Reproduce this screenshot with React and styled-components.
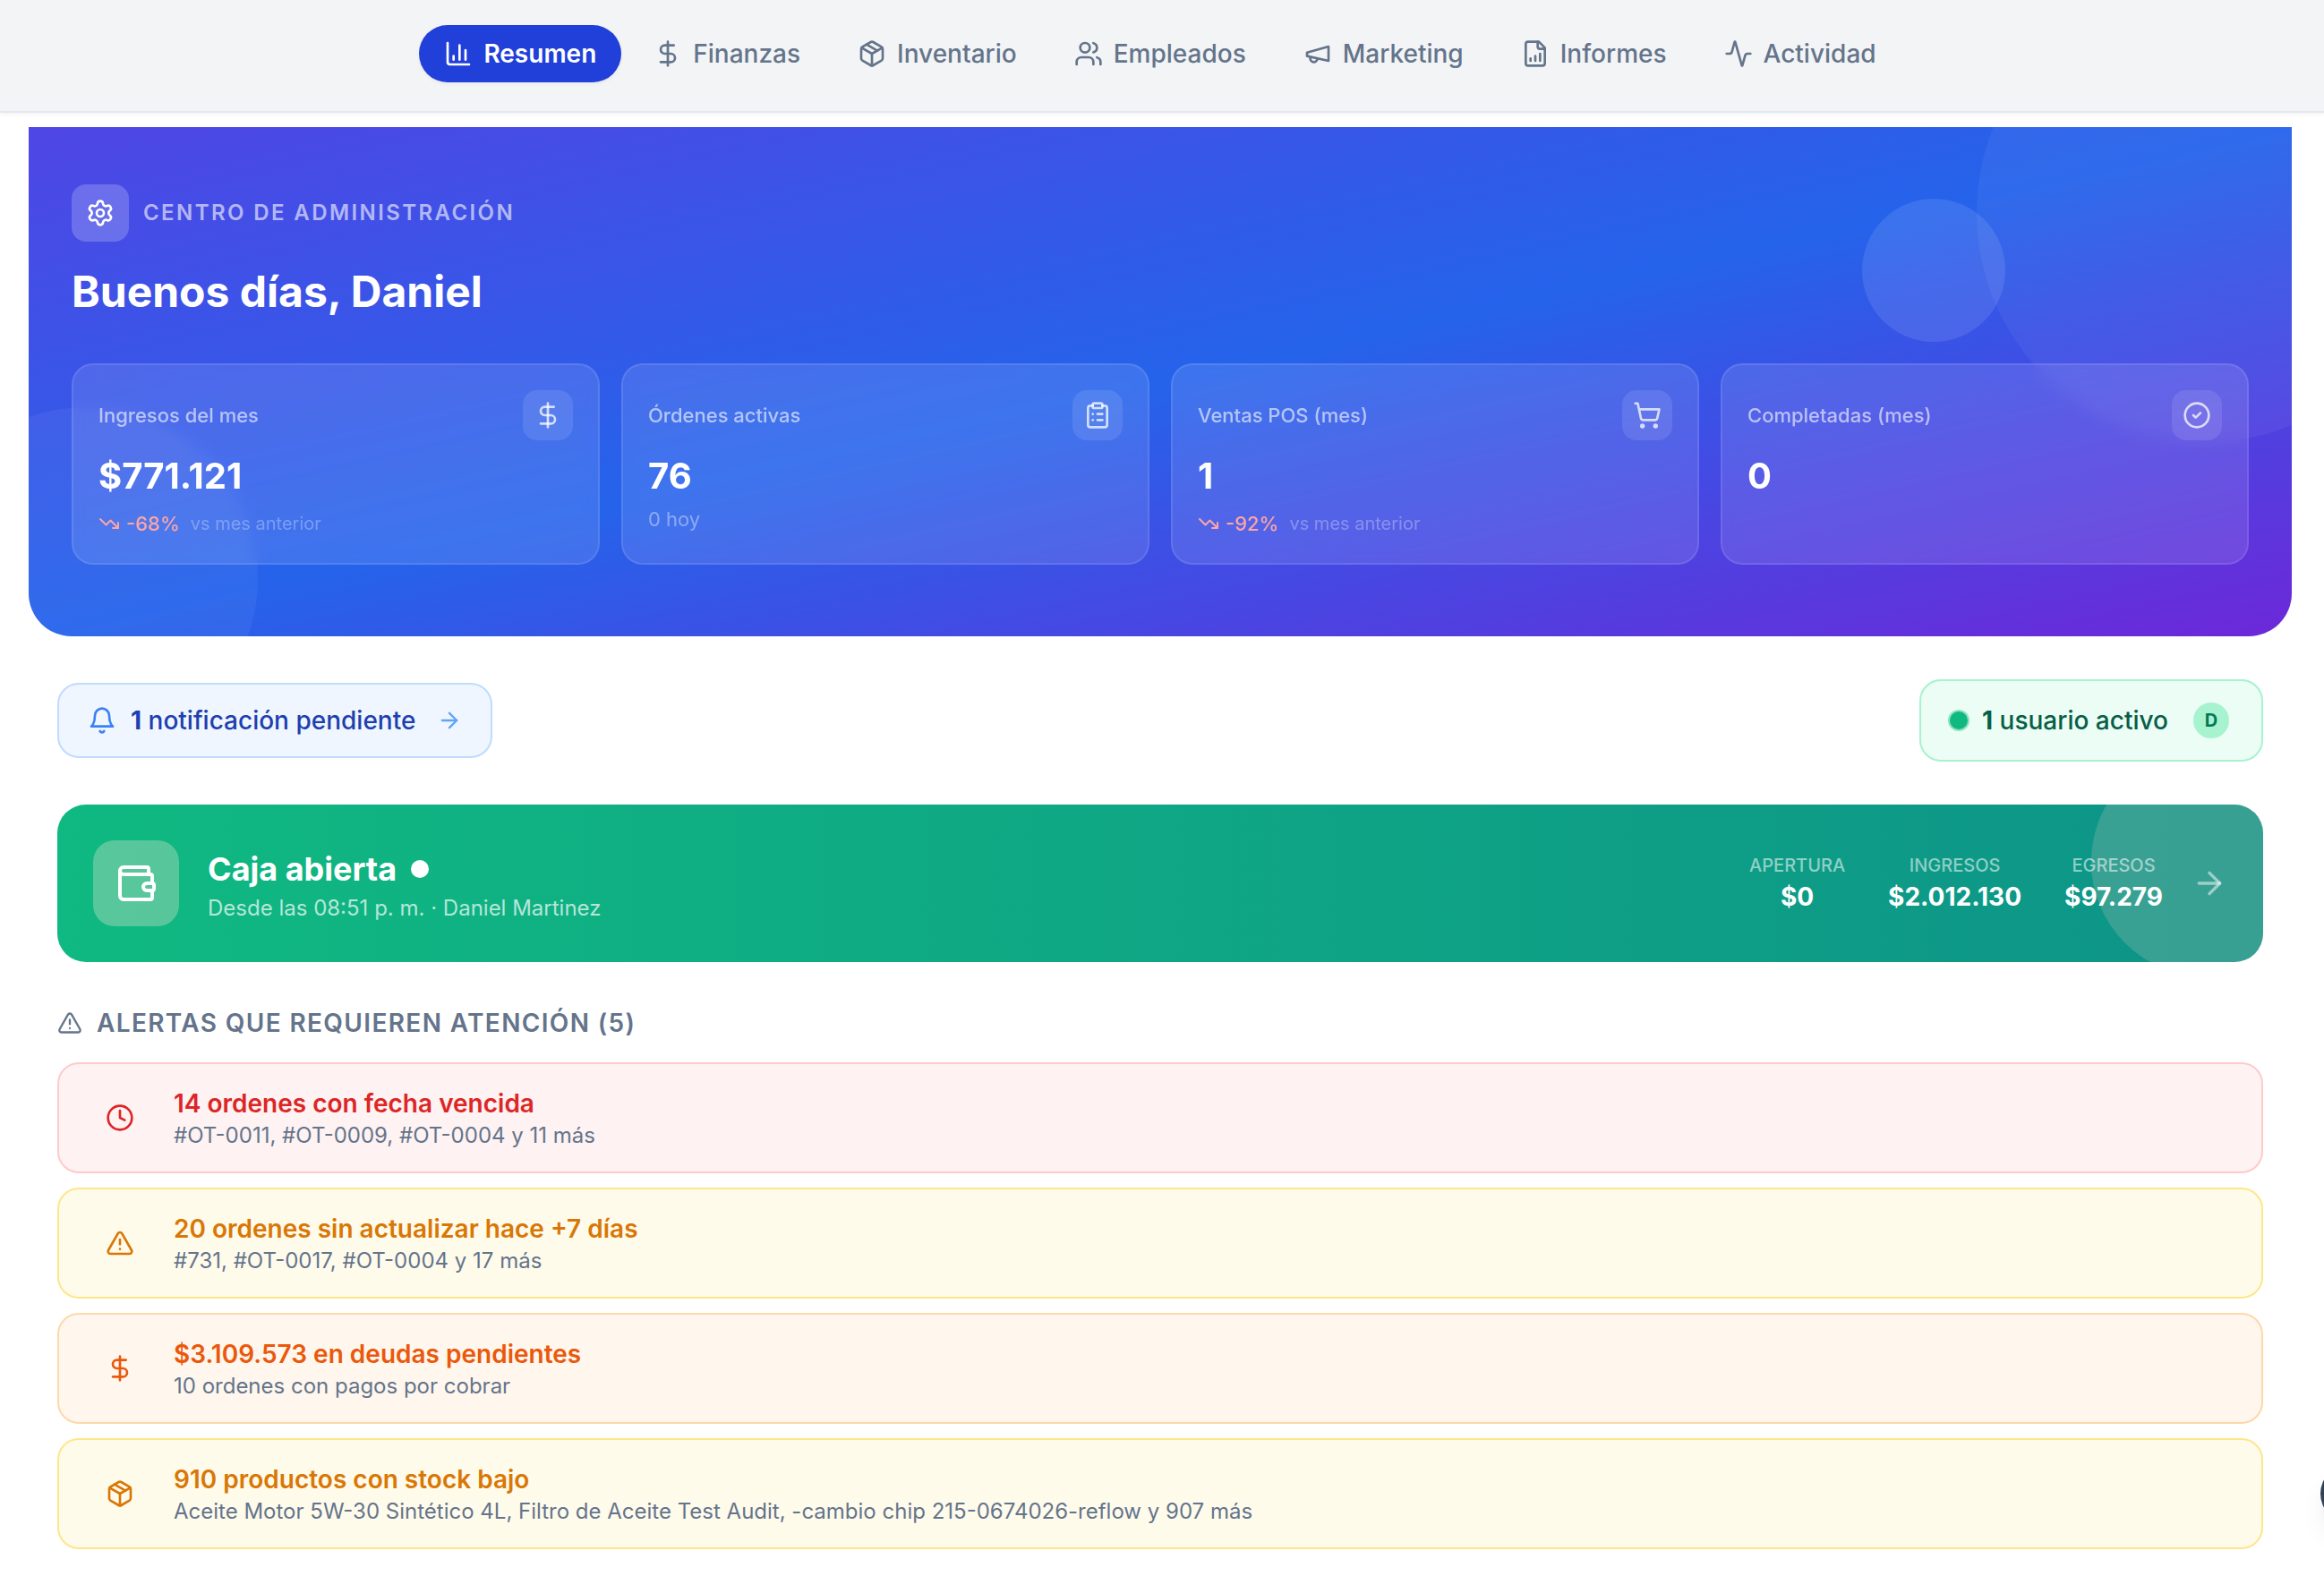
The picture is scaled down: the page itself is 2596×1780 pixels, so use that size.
import React from "react";
import styled, { createGlobalStyle, css } from "styled-components";
import {
  Activity,
  ArrowRight,
  CircleCheck,
  ChartColumn,
  ClipboardList,
  Clock,
  DollarSign,
  Package,
  Settings,
  ShoppingCart,
  TrendingDown,
  TriangleAlert,
  Users,
  Wallet
} from "lucide-react";

const GlobalStyle = createGlobalStyle`
  *, *::before, *::after {
    box-sizing: border-box;
  }
  body {
    margin: 0;
    background: #ffffff;
    font-family: Inter, sans-serif;
    -webkit-font-smoothing: antialiased;
  }
  svg {
    display: block;
    flex-shrink: 0;
  }
`;

const Glyph = ({ size = 32, children }) => (
  <svg
    width={size}
    height={size}
    viewBox="0 0 24 24"
    fill="none"
    stroke="currentColor"
    strokeWidth="2"
    strokeLinecap="round"
    strokeLinejoin="round"
  >
    {children}
  </svg>
);

const Megaphone = ({ size }) => (
  <Glyph size={size}>
    <path d="m3 11 18-5v12L3 14v-3z" />
    <path d="M11.6 16.8a3 3 0 1 1-5.8-1.6" />
  </Glyph>
);

const FileChart = ({ size }) => (
  <Glyph size={size}>
    <path d="M15 2H6a2 2 0 0 0-2 2v16a2 2 0 0 0 2 2h12a2 2 0 0 0 2-2V7Z" />
    <path d="M14 2v4a2 2 0 0 0 2 2h4" />
    <path d="M8 18v-2" />
    <path d="M12 18v-4" />
    <path d="M16 18v-6" />
  </Glyph>
);

const Bell = ({ size }) => (
  <Glyph size={size}>
    <path d="M6 8a6 6 0 0 1 12 0c0 7 3 9 3 9H3s3-2 3-9" />
    <path d="M10.3 21a1.94 1.94 0 0 0 3.4 0" />
  </Glyph>
);

const tabs = [
  { label: "Resumen", icon: ChartColumn, active: true },
  { label: "Finanzas", icon: DollarSign },
  { label: "Inventario", icon: Package },
  { label: "Empleados", icon: Users },
  { label: "Marketing", icon: Megaphone },
  { label: "Informes", icon: FileChart },
  { label: "Actividad", icon: Activity }
];

const stats = [
  { label: "Ingresos del mes", value: "$771.121", icon: DollarSign, trend: "-68%" },
  { label: "Órdenes activas", value: "76", icon: ClipboardList, note: "0 hoy" },
  { label: "Ventas POS (mes)", value: "1", icon: ShoppingCart, trend: "-92%" },
  { label: "Completadas (mes)", value: "0", icon: CircleCheck }
];

const totals = [
  { label: "Apertura", value: "$0" },
  { label: "Ingresos", value: "$2.012.130" },
  { label: "Egresos", value: "$97.279" }
];

const alerts = [
  {
    tone: "red",
    icon: Clock,
    title: "14 ordenes con fecha vencida",
    detail: "#OT-0011, #OT-0009, #OT-0004 y 11 más"
  },
  {
    tone: "amber",
    icon: TriangleAlert,
    title: "20 ordenes sin actualizar hace +7 días",
    detail: "#731, #OT-0017, #OT-0004 y 17 más"
  },
  {
    tone: "orange",
    icon: DollarSign,
    title: "$3.109.573 en deudas pendientes",
    detail: "10 ordenes con pagos por cobrar"
  },
  {
    tone: "amber",
    icon: Package,
    title: "910 productos con stock bajo",
    detail:
      "Aceite Motor 5W-30 Sintético 4L, Filtro de Aceite Test Audit, -cambio chip 215-0674026-reflow y 907 más"
  }
];

const tones = {
  red: { bg: "#fef2f2", border: "#fecaca", text: "#dc2626" },
  amber: { bg: "#fffbeb", border: "#fde68a", text: "#d97706" },
  orange: { bg: "#fff7ed", border: "#fed7aa", text: "#ea580c" }
};

const App = () => (
  <Page>
    <GlobalStyle />
    <TopBar>
      {tabs.map(({ label, icon: Icon, active }) => (
        <Tab key={label} $active={active}>
          <Icon size={32} />
          {label}
        </Tab>
      ))}
    </TopBar>

    <Main>
      <Hero>
        <Bubble $size={512} $top="-160px" $right="-160px" $alpha={0.05} />
        <Bubble $size={384} $bottom="-128px" $left="-128px" $alpha={0.05} />
        <Bubble $size={160} $top="80px" $right="320px" $alpha={0.1} />
        <Eyebrow>
          <EyebrowIcon>
            <Settings size={32} />
          </EyebrowIcon>
          <EyebrowText>Centro de Administración</EyebrowText>
        </Eyebrow>
        <Greeting>Buenos días, Daniel</Greeting>
        <StatGrid>
          {stats.map(({ label, value, icon: Icon, trend, note }) => (
            <StatCard key={label}>
              <StatHead>
                {label}
                <StatIcon>
                  <Icon size={32} />
                </StatIcon>
              </StatHead>
              <StatValue>{value}</StatValue>
              {trend && (
                <Trend>
                  <TrendingDown size={24} />
                  {trend}
                  <TrendHint>vs mes anterior</TrendHint>
                </Trend>
              )}
              {note && <StatNote>{note}</StatNote>}
            </StatCard>
          ))}
        </StatGrid>
      </Hero>

      <Content>
        <StatusRow>
          <Notice>
            <Bell size={32} />
            <span>
              <b>1</b> notificación pendiente
            </span>
            <NoticeArrow>
              <ArrowRight size={28} />
            </NoticeArrow>
          </Notice>
          <OnlineUsers>
            <OnlineDot />
            <span>
              <b>1</b> usuario activo
            </span>
            <Avatar>D</Avatar>
          </OnlineUsers>
        </StatusRow>

        <CashPanel>
          <CashBubble />
          <CashIcon>
            <Wallet size={48} />
          </CashIcon>
          <CashInfo>
            <CashTitle>
              Caja abierta
              <CashDot />
            </CashTitle>
            <CashSince>Desde las 08:51 p. m. · Daniel Martinez</CashSince>
          </CashInfo>
          <Totals>
            {totals.map(({ label, value }) => (
              <Total key={label}>
                <TotalLabel>{label}</TotalLabel>
                <TotalValue>{value}</TotalValue>
              </Total>
            ))}
          </Totals>
          <CashArrow>
            <ArrowRight size={40} />
          </CashArrow>
        </CashPanel>

        <section>
          <SectionTitle>
            <TriangleAlert size={28} />
            Alertas que requieren atención (5)
          </SectionTitle>
          <AlertList>
            {alerts.map(({ tone, icon: Icon, title, detail }) => (
              <Alert key={title} $tone={tones[tone]}>
                <AlertIcon>
                  <Icon size={32} />
                </AlertIcon>
                <div>
                  <AlertTitle>{title}</AlertTitle>
                  <AlertDetail>{detail}</AlertDetail>
                </div>
              </Alert>
            ))}
          </AlertList>
        </section>
      </Content>
    </Main>
    <FloatingButton />
  </Page>
);

export default App;

const Page = styled.div`
  position: relative;
  width: 2596px;
  height: 1780px;
  overflow: hidden;
`;

const TopBar = styled.nav`
  display: flex;
  justify-content: center;
  gap: 8px;
  height: 126px;
  padding: 28px 4px 32px 0;
  background: #f3f4f6;
  border-bottom: 2px solid #e2e8f0;
  box-shadow: 0 2px 4px rgba(0, 0, 0, 0.05);
`;

const Tab = styled.button`
  display: flex;
  align-items: center;
  gap: 12px;
  height: 64px;
  padding: 0 28px;
  border: 0;
  border-radius: 32px;
  background: transparent;
  color: #64748b;
  font: 500 28px/40px Inter, sans-serif;
  ${({ $active }) =>
    $active &&
    css`
      background: #213fd9;
      color: #ffffff;
      font-weight: 600;
      box-shadow: 0 2px 4px rgba(0, 0, 0, 0.05);
    `}
`;

const Main = styled.main`
  padding: 16px 36px 0 32px;
`;

const Hero = styled.section`
  position: relative;
  overflow: hidden;
  padding: 64px 48px 80px;
  border-radius: 0 0 48px 48px;
  background: linear-gradient(to bottom right, #4f46e5, #2563eb, #6d28d9);
  color: #ffffff;
`;

const Bubble = styled.div`
  position: absolute;
  width: ${({ $size }) => $size}px;
  height: ${({ $size }) => $size}px;
  top: ${({ $top }) => $top || "auto"};
  right: ${({ $right }) => $right || "auto"};
  bottom: ${({ $bottom }) => $bottom || "auto"};
  left: ${({ $left }) => $left || "auto"};
  border-radius: 50%;
  background: rgba(255, 255, 255, ${({ $alpha }) => $alpha});
`;

const Eyebrow = styled.div`
  display: flex;
  align-items: center;
  gap: 16px;
`;

const EyebrowIcon = styled.div`
  display: grid;
  place-items: center;
  width: 64px;
  height: 64px;
  border-radius: 16px;
  background: rgba(255, 255, 255, 0.2);
`;

const EyebrowText = styled.span`
  color: rgba(255, 255, 255, 0.6);
  font-size: 24px;
  font-weight: 600;
  letter-spacing: 0.1em;
  line-height: 32px;
  text-transform: uppercase;
`;

const Greeting = styled.h1`
  margin: 24px 0 48px;
  font-size: 48px;
  font-weight: 700;
  line-height: 64px;
`;

const StatGrid = styled.div`
  display: grid;
  grid-template-columns: repeat(4, 1fr);
  gap: 24px;
`;

const StatCard = styled.div`
  position: relative;
  padding: 28px;
  border: 2px solid rgba(255, 255, 255, 0.1);
  border-radius: 24px;
  background: rgba(255, 255, 255, 0.115);
  backdrop-filter: blur(8px);
`;

const StatHead = styled.div`
  display: flex;
  align-items: center;
  justify-content: space-between;
  margin-bottom: 12px;
  color: rgba(255, 255, 255, 0.6);
  font-size: 22px;
  font-weight: 500;
`;

const StatIcon = styled.div`
  display: grid;
  place-items: center;
  width: 56px;
  height: 56px;
  border-radius: 16px;
  background: rgba(255, 255, 255, 0.1);
  color: rgba(255, 255, 255, 0.75);
`;

const StatValue = styled.div`
  font-size: 40px;
  font-weight: 700;
  line-height: 56px;
`;

const Trend = styled.div`
  display: flex;
  align-items: center;
  gap: 7px;
  margin-top: 8px;
  padding-top: 1px;
  color: #fca5a5;
  font-size: 22px;
  font-weight: 500;
  line-height: 32px;
`;

const TrendHint = styled.span`
  margin-left: 5px;
  color: rgba(255, 255, 255, 0.3);
  font-size: 20px;
  font-weight: 400;
`;

const StatNote = styled.div`
  margin-top: 4px;
  color: rgba(255, 255, 255, 0.4);
  font-size: 22px;
  line-height: 33px;
`;

const Content = styled.div`
  display: flex;
  flex-direction: column;
  gap: 48px;
  padding: 48px 32px 0;
`;

const StatusRow = styled.div`
  display: flex;
  align-items: center;
  justify-content: space-between;
`;

const Pill = styled.div`
  display: flex;
  align-items: center;
  gap: 16px;
  padding: 20px 32px;
  border: 2px solid;
  border-radius: 24px;
  font-size: 28px;
  font-weight: 500;
  line-height: 40px;

  b {
    font-weight: 700;
  }
`;

const Notice = styled(Pill)`
  border-color: #bfdbfe;
  background: #eff6ff;
  color: #3b82f6;

  span {
    color: #1e40af;
  }
`;

const NoticeArrow = styled.div`
  margin-left: 8px;
  color: #60a5fa;
`;

const OnlineUsers = styled(Pill)`
  border-color: #a7f3d0;
  background: #ecfdf5;
  color: #065f46;
`;

const OnlineDot = styled.div`
  width: 20px;
  height: 20px;
  border-radius: 50%;
  background: #10b981;
  box-shadow: 0 0 0 2px #8fe3c0;
`;

const Avatar = styled.div`
  display: grid;
  place-items: center;
  width: 48px;
  height: 48px;
  margin-left: 8px;
  border: 4px solid #ecfdf5;
  border-radius: 50%;
  background: #a7f3d0;
  color: #047857;
  font-size: 20px;
  font-weight: 700;
  line-height: 1;
`;

const CashPanel = styled.div`
  position: relative;
  display: flex;
  align-items: center;
  overflow: hidden;
  padding: 40px;
  border-radius: 32px;
  background: linear-gradient(to right, #10b981, #0d9488);
  color: #ffffff;
`;

const CashBubble = styled.div`
  position: absolute;
  top: -64px;
  right: -64px;
  width: 256px;
  height: 256px;
  border-radius: 50%;
  background: rgba(232, 204, 196, 0.2);
`;

const CashIcon = styled.div`
  display: grid;
  place-items: center;
  width: 96px;
  height: 96px;
  margin-right: 32px;
  border-radius: 24px;
  background: rgba(255, 234, 216, 0.3);
`;

const CashInfo = styled.div`
  flex: 1;
`;

const CashTitle = styled.div`
  display: flex;
  align-items: center;
  gap: 16px;
  font-size: 36px;
  font-weight: 700;
  line-height: 56px;
`;

const CashDot = styled.span`
  width: 20px;
  height: 20px;
  border-radius: 50%;
  background: #ffffff;
`;

const CashSince = styled.div`
  color: rgba(255, 255, 255, 0.7);
  font-size: 24px;
  line-height: 32px;
`;

const Totals = styled.div`
  position: relative;
  display: flex;
  gap: 48px;
`;

const Total = styled.div`
  text-align: center;
`;

const TotalLabel = styled.div`
  color: rgba(255, 255, 255, 0.55);
  font-size: 20px;
  font-weight: 500;
  line-height: 30px;
  text-transform: uppercase;
`;

const TotalValue = styled.div`
  font-size: 28px;
  font-weight: 700;
  line-height: 40px;
`;

const CashArrow = styled.div`
  position: relative;
  margin-left: 32px;
  color: rgba(255, 255, 255, 0.5);
`;

const SectionTitle = styled.h2`
  display: flex;
  align-items: center;
  gap: 16px;
  margin: 0 0 24px;
  color: #64748b;
  font-size: 28px;
  font-weight: 600;
  letter-spacing: 1.36px;
  line-height: 40px;
  text-transform: uppercase;
`;

const AlertList = styled.div`
  display: flex;
  flex-direction: column;
  gap: 16px;
`;

const Alert = styled.div`
  display: flex;
  align-items: center;
  gap: 24px;
  padding: 24px 32px;
  border: 2px solid ${({ $tone }) => $tone.border};
  border-radius: 24px;
  background: ${({ $tone }) => $tone.bg};
  color: ${({ $tone }) => $tone.text};
`;

const AlertIcon = styled.div`
  padding: 20px;
`;

const AlertTitle = styled.div`
  font-size: 28px;
  font-weight: 600;
  line-height: 40px;
`;

const AlertDetail = styled.div`
  color: #64748b;
  font-size: 24px;
  line-height: 32px;
`;

const FloatingButton = styled.button`
  position: absolute;
  top: 1637px;
  left: 2592px;
  width: 64px;
  height: 64px;
  border: 0;
  border-radius: 50%;
  background: #334155;
  box-shadow: 0 20px 30px -6px rgba(0, 0, 0, 0.1), 0 8px 12px -8px rgba(0, 0, 0, 0.1);
`;
